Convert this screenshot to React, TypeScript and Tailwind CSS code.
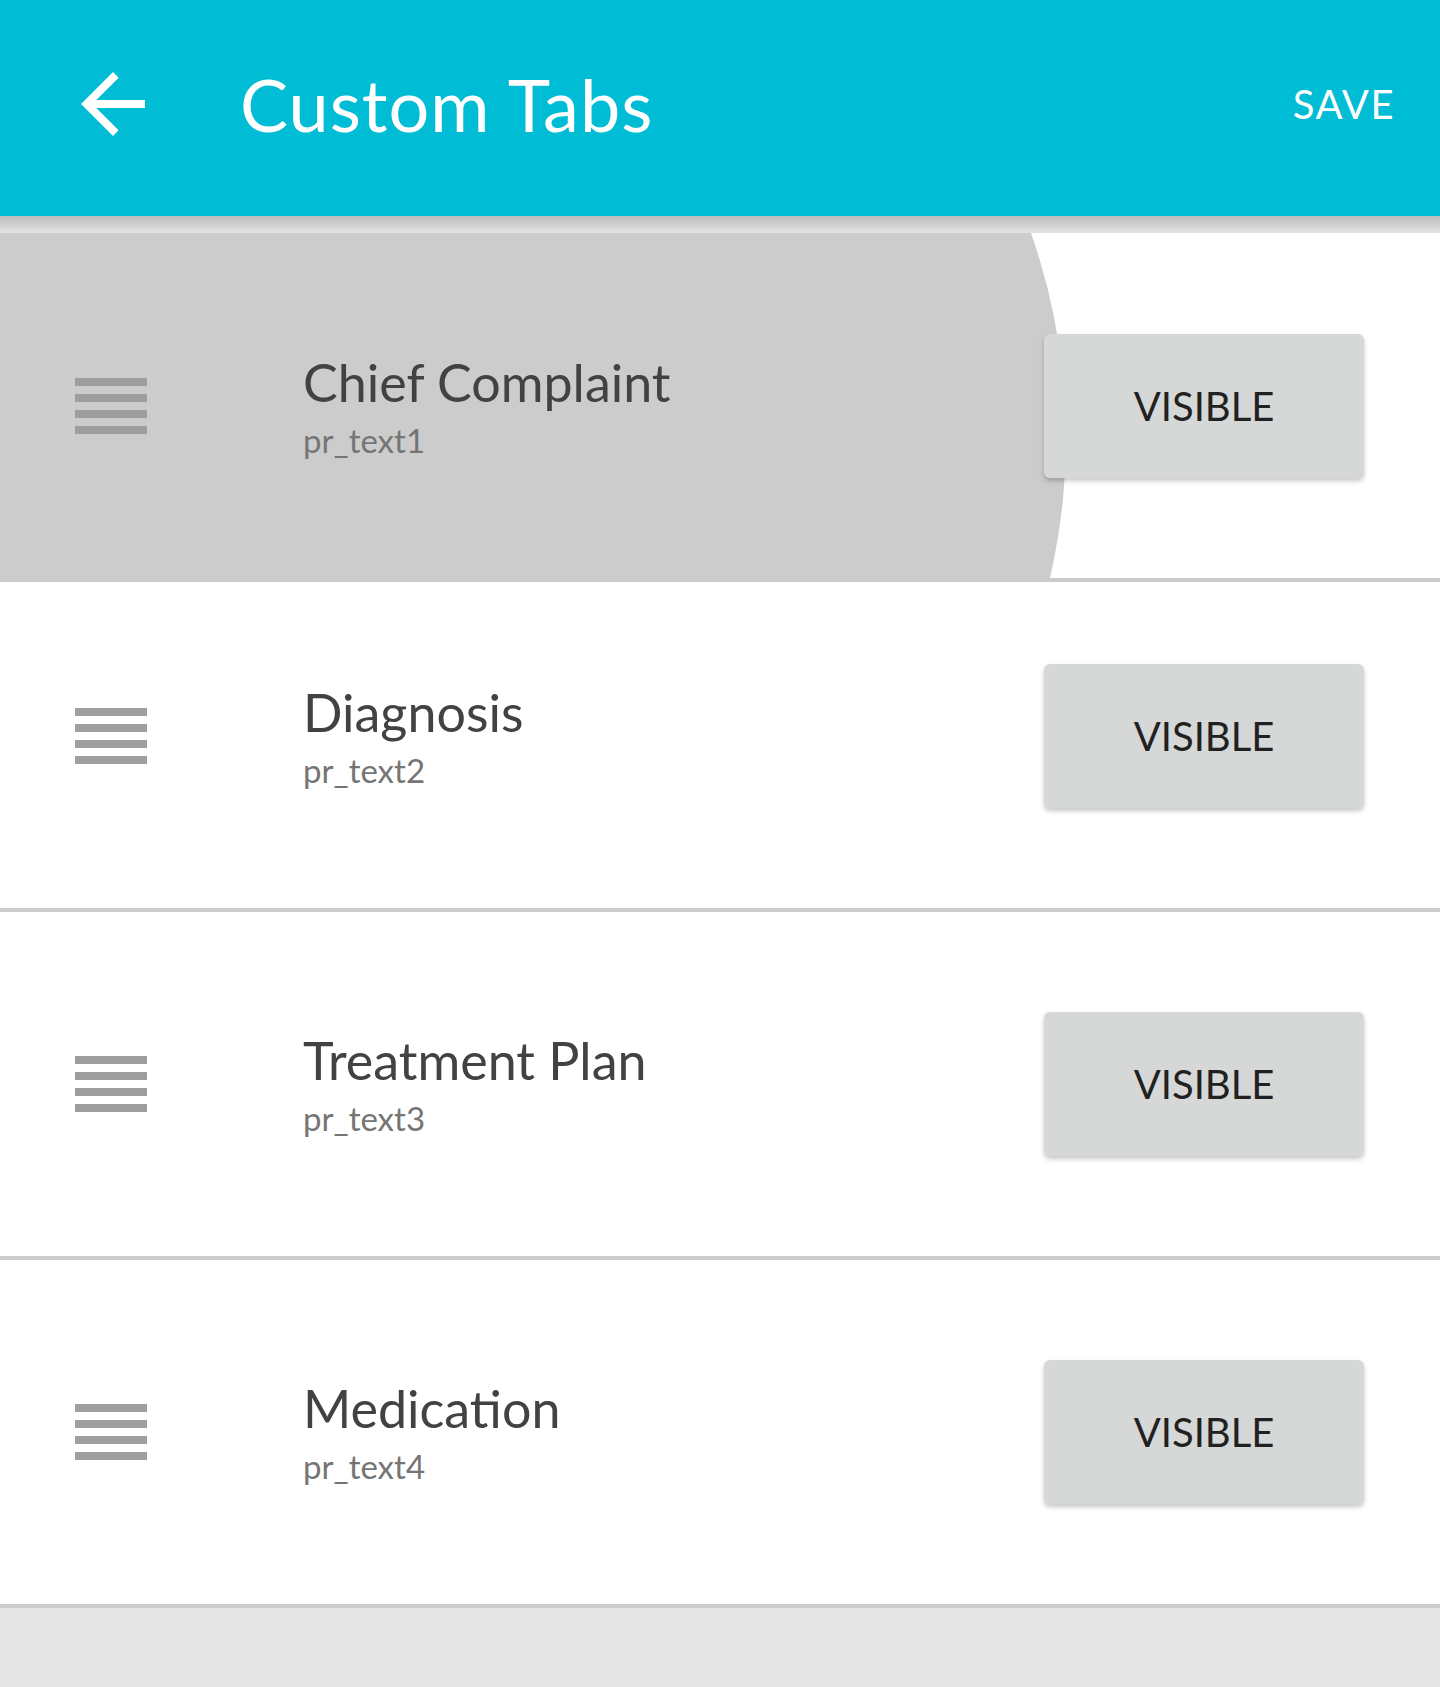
import { ReactNode } from "react";

type Tab = { title: string; code: string };

const TABS: Tab[] = [
  { title: "Chief Complaint", code: "pr_text1" },
  { title: "Diagnosis", code: "pr_text2" },
  { title: "Treatment Plan", code: "pr_text3" },
  { title: "Medication", code: "pr_text4" },
];

function DragHandle() {
  return (
    <div className="flex w-[72px] flex-col gap-[8px]">
      <div className="h-[8px] bg-[#9e9e9e]" />
      <div className="h-[8px] bg-[#9e9e9e]" />
      <div className="h-[8px] bg-[#9e9e9e]" />
      <div className="h-[8px] bg-[#9e9e9e]" />
    </div>
  );
}

function TabRow({ tab, className, children }: { tab: Tab; className: string; children?: ReactNode }) {
  return (
    <div className={"relative flex shrink-0 items-center overflow-hidden bg-white " + className}>
      {children}
      <div className="relative ml-[75px]">
        <DragHandle />
      </div>
      <div className="relative ml-[156px] flex flex-1 flex-col">
        <span className="text-[52px] leading-[60px] text-[#424242]">{tab.title}</span>
        <span className="mt-[8px] text-[33px] leading-[40px] text-[#757575]">{tab.code}</span>
      </div>
      <button className="relative mr-[76px] flex h-[144px] w-[320px] items-center justify-center rounded-[6px] bg-[#d6d7d7] text-[40px] text-[#212121] shadow-[0_3px_5px_rgba(0,0,0,0.22)]">
        VISIBLE
      </button>
    </div>
  );
}

export default function App() {
  return (
    <div className="flex h-[1687px] w-[1440px] flex-col bg-[#e5e5e5] font-['Lato',sans-serif]">
      {/* toolbar */}
      <header className="relative z-10 flex h-[216px] shrink-0 items-center bg-[#00bcd4] pb-[8px] text-white">
        <svg viewBox="0 0 24 24" className="ml-[65px] h-[96px] w-[96px]" fill="white">
          <path d="M20 11H7.83l5.59-5.59L12 4l-8 8 8 8 1.41-1.41L7.83 13H20v-2z" />
        </svg>
        <h1 className="ml-[79px] flex-1 text-[72px] leading-none tracking-[1px]">Custom Tabs</h1>
        <span className="mr-[45px] text-[40px] leading-none tracking-[1.5px]">SAVE</span>
      </header>
      <div className="h-[17px] shrink-0 bg-gradient-to-b from-[#bcbcbc] to-[#e3e3e3]" />

      <TabRow tab={TABS[0]} className="h-[345px]">
        {/* touch ripple */}
        <div className="absolute left-[-170px] top-[-413px] h-[1236px] w-[1236px] rounded-full bg-[#cccccc]" />
      </TabRow>
      <div className="h-[4px] shrink-0 bg-[#cccccc]" />
      <TabRow tab={TABS[1]} className="h-[326px] pb-[18px]" />
      <div className="h-[4px] shrink-0 bg-[#cccccc]" />
      <TabRow tab={TABS[2]} className="h-[344px]" />
      <div className="h-[4px] shrink-0 bg-[#cccccc]" />
      <TabRow tab={TABS[3]} className="h-[344px]" />
      <div className="h-[4px] shrink-0 bg-[#cccccc]" />
      <div className="flex-1 bg-[#e5e5e5]" />
    </div>
  );
}
